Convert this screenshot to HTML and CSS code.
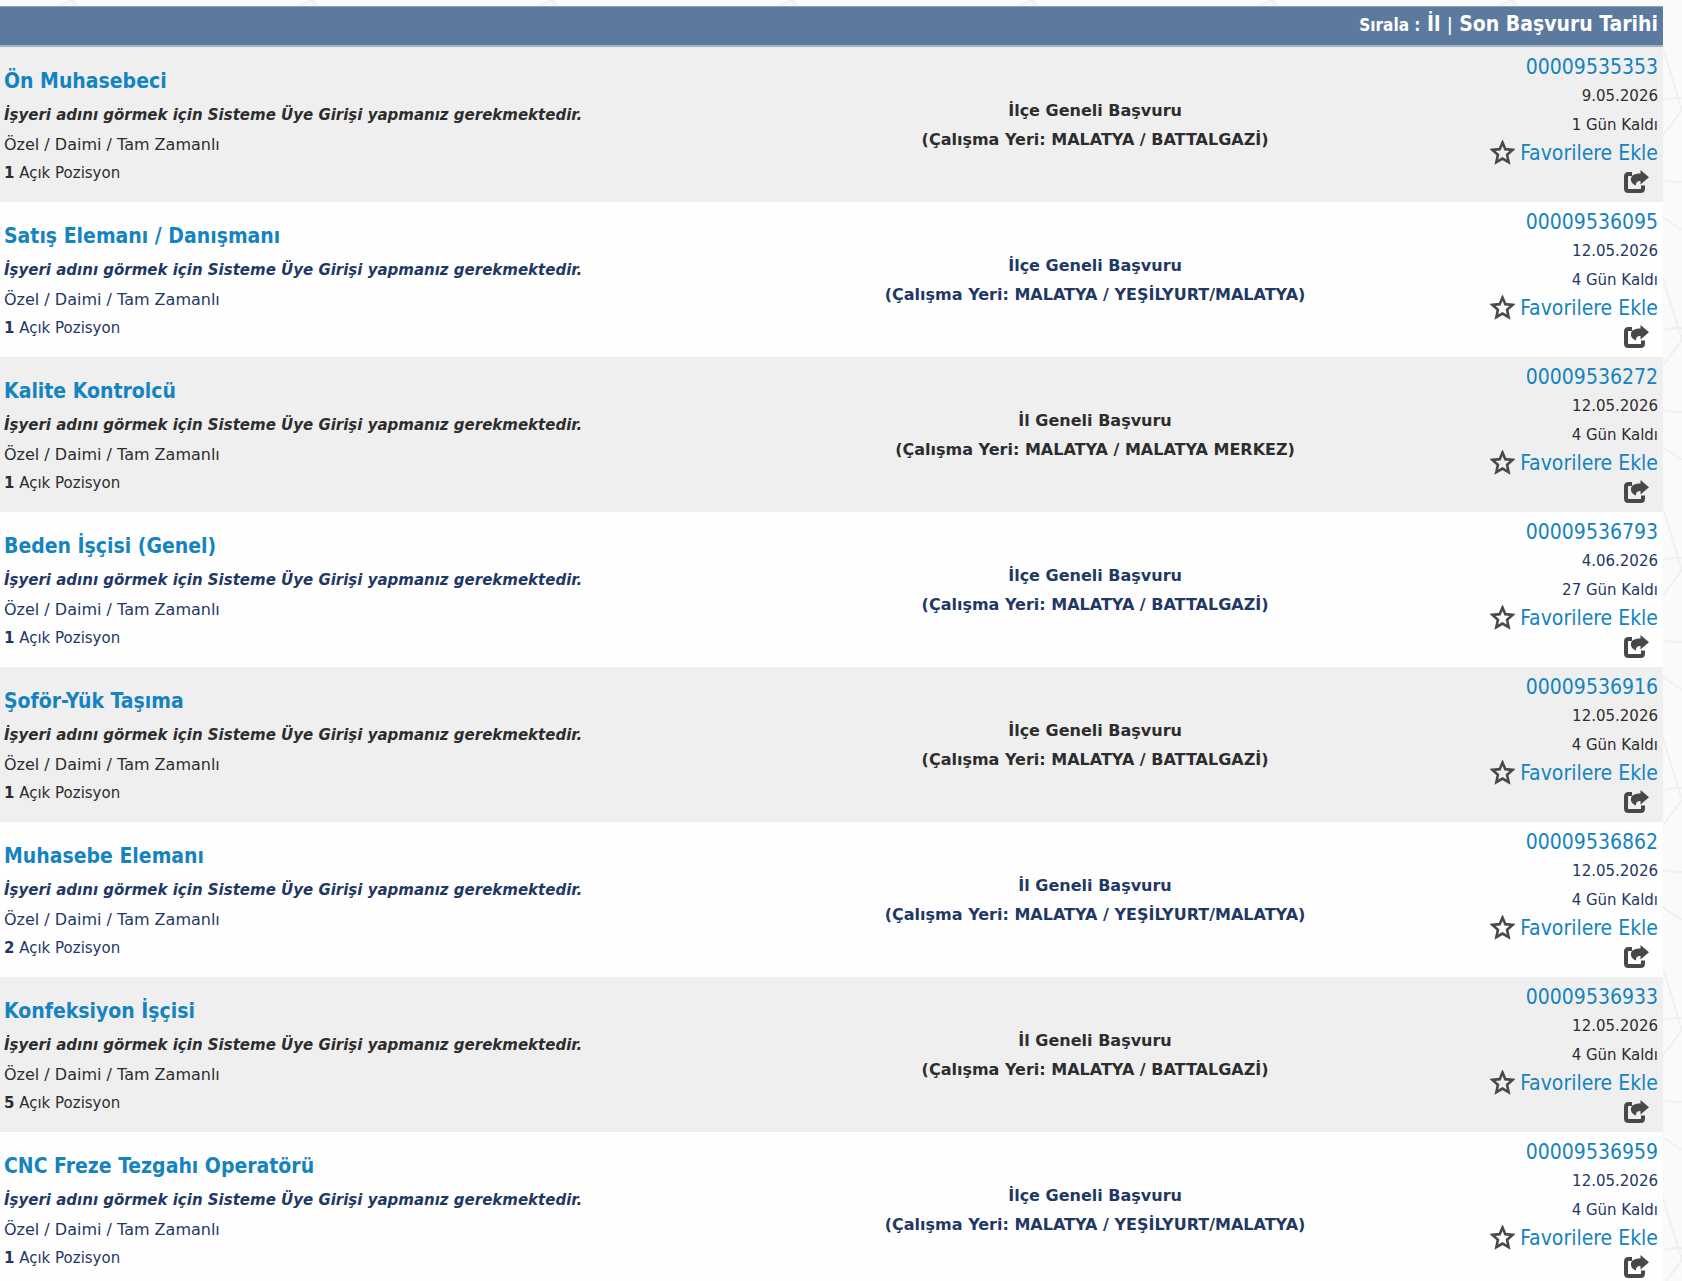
FILE: index.html
```html
<!DOCTYPE html>
<html lang="tr">
<head>
<meta charset="utf-8">
<title>Açık İşler</title>
<link rel="stylesheet" href="styles.css">
</head>
<body>
<table class="jobs">
<colgroup><col class="col-info"><col class="col-place"><col class="col-meta"></colgroup>
<thead><tr><th colspan="3"><span class="sort-label">Sırala :</span> <a href="#il">İl</a> <span class="sep">|</span> <a href="#tarih">Son Başvuru Tarihi</a></th></tr></thead>
<tbody id="rows"></tbody>
</table>
<script src="rows.js"></script>
</body>
</html>
```
FILE: rows.js
```js
const jobs = [
  ["Ön Muhasebeci", 1, "İlçe", "BATTALGAZİ", "00009535353", "9.05.2026", 1],
  ["Satış Elemanı / Danışmanı", 1, "İlçe", "YEŞİLYURT/MALATYA", "00009536095", "12.05.2026", 4],
  ["Kalite Kontrolcü", 1, "İl", "MALATYA MERKEZ", "00009536272", "12.05.2026", 4],
  ["Beden İşçisi (Genel)", 1, "İlçe", "BATTALGAZİ", "00009536793", "4.06.2026", 27],
  ["Şoför-Yük Taşıma", 1, "İlçe", "BATTALGAZİ", "00009536916", "12.05.2026", 4],
  ["Muhasebe Elemanı", 2, "İl", "YEŞİLYURT/MALATYA", "00009536862", "12.05.2026", 4],
  ["Konfeksiyon İşçisi", 5, "İl", "BATTALGAZİ", "00009536933", "12.05.2026", 4],
  ["CNC Freze Tezgahı Operatörü", 1, "İlçe", "YEŞİLYURT/MALATYA", "00009536959", "12.05.2026", 4]
];
const star = '<svg class="star" viewBox="0 0 24 24" aria-hidden="true"><path d="M12 2.500l2.700 6.300 7 .7-5.300 4.600 1.500 7.200L12 17.800l-5.900 3.500 1.500-7.200L2.300 9.500l7-.7z"/></svg>';
const share = '<svg class="share" viewBox="0 0 25 23" aria-hidden="true"><path class="box" d="M8 4H4.500Q2 4 2 6.500V18.500Q2 21 4.500 21H16.500Q19 21 19 18.500V15.500"/><path class="arrow" d="M16.500 0L25 7.200 16.500 14.500V11C13.500 11 12 12 12 15.500C8.500 14 6.500 12 7 8.500C7.500 5 11 3.600 16.500 3.600z"/></svg>';
document.getElementById("rows").innerHTML = jobs.map(([title, count, scope, place, no, date, days]) => `
<tr>
<td class="info"><a class="title" href="#${no}">${title}</a><em>İşyeri adını görmek için Sisteme Üye Girişi yapmanız gerekmektedir.</em><p class="terms">Özel / Daimi / Tam Zamanlı</p><p><b>${count}</b> Açık Pozisyon</p></td>
<td class="place"><p>${scope} Geneli Başvuru</p><p>(Çalışma Yeri: MALATYA / ${place})</p></td>
<td class="meta"><a class="number" href="#${no}">${no}</a><p>${date}</p><p>${days} Gün Kaldı</p><a class="favorite" href="#favori">${star}Favorilere Ekle</a><button class="share-button" type="button" aria-label="Paylaş">${share}</button></td>
</tr>`).join("");
```
FILE: styles.css
```css
* { box-sizing: border-box; }
body {
  margin: 0;
  padding: 6px 19px 0 0;
  overflow-x: hidden;
  background: #fafafa url("data:image/svg+xml,%3Csvg xmlns='http://www.w3.org/2000/svg' width='240' height='230' fill='none' stroke='%23f0f0f0' stroke-width='2'%3E%3Cpath d='M0 30L70 0L130 60L220 45L240 110L180 190L90 150L20 200L0 120M70 0L90 150L220 45M130 60L180 190L240 230M20 200L130 60'/%3E%3Ccircle cx='235' cy='140' r='42'/%3E%3C/svg%3E") right top;
  color: #1f3864;
  font: 15px/29px "DejaVu Sans", Verdana, sans-serif;
}
p { margin: 0; }
a { color: #1583c0; text-decoration: none; }
.jobs {
  width: 100%;
  table-layout: fixed;
  border-collapse: separate;
  border-spacing: 0;
}
.col-info { width: 49%; }
.col-place { width: 34%; }
.col-meta { width: 17%; }
th {
  height: 41px;
  padding: 0 5px 4px;
  background: #5c799e;
  border-top: 1px solid #8da2b8;
  border-bottom: 2px solid #9fb2c6;
  color: #fff;
  text-align: right;
  font: bold 21px/32px "DejaVu Sans Condensed", Tahoma, sans-serif;
}
th a { color: #fff; }
.sort-label, .sep { font-size: 17px; }
td {
  height: 155px;
  padding: 0;
  vertical-align: middle;
  background: #fefefe;
  white-space: nowrap;
}
tbody tr:nth-child(odd) { color: #2d2d2d; }
tbody tr:nth-child(odd) td { background: #efefef; }
.info { padding-left: 4px; }
.title {
  display: block;
  font: bold 21px/40px "DejaVu Sans Condensed", Tahoma, sans-serif;
}
.info em { display: block; font-weight: bold; }
.terms { font-size: 16px; }
.place { padding-right: 5px; text-align: center; font-size: 16px; font-weight: bold; }
.meta { padding-right: 5px; text-align: right; }
.number, .favorite {
  display: block;
  font: 21px/29px "DejaVu Sans Condensed", Tahoma, sans-serif;
}
.favorite {
  display: flex;
  justify-content: flex-end;
  align-items: center;
  gap: 5px;
  line-height: 26px;
}
.star { width: 25px; height: 25px; fill: none; stroke: #4c4844; stroke-width: 2.5; }
.share-button {
  display: block;
  height: 31px;
  margin-left: auto;
  padding: 0 9px 0 0;
  border: 0;
  background: none;
}
.share { display: block; width: 25px; height: 23px; }
.box { fill: none; stroke: #484848; stroke-width: 4; }
.arrow { fill: #484848; }
```
